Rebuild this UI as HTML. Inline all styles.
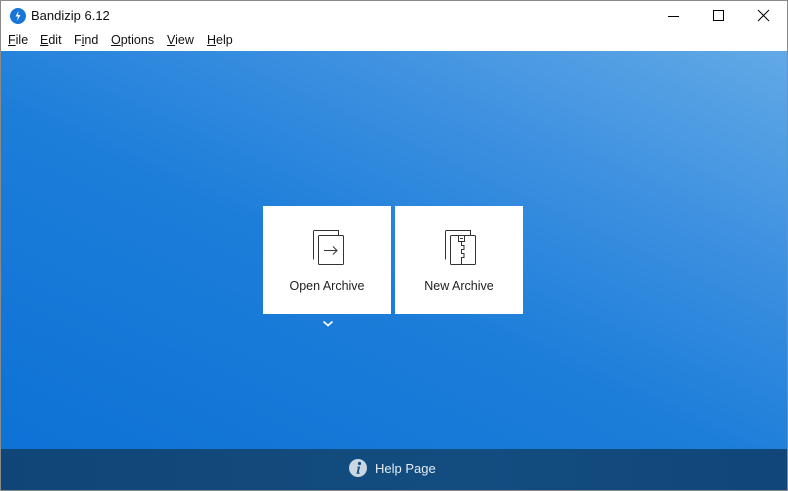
<!DOCTYPE html>
<html><head><meta charset="utf-8"><style>
*{margin:0;padding:0;box-sizing:border-box}
body{width:788px;height:491px;overflow:hidden;font-family:"Liberation Sans","Noto Sans CJK KR",sans-serif;background:#fff;position:relative}
.frame{position:absolute;inset:0;border:1px solid #8a8a8a}
.title{position:absolute;left:1px;top:1px;right:1px;height:29px;background:#fff}
.title .t{position:absolute;left:30px;top:7px;font-size:13px;color:#111}
.logo{position:absolute;left:9px;top:7px;width:16px;height:16px;border-radius:50%;background:#1877d6}
.menu{position:absolute;left:1px;top:30px;right:1px;height:21px;background:#fff;font-size:12.5px;color:#111}
.menu span{position:absolute;top:3px}
.menu u{text-decoration:underline}
.main{position:absolute;left:1px;top:51px;right:1px;height:398px;background:linear-gradient(205deg,#62a9e6 0%,#3b8fe0 30%,#1d7ed9 55%,#0d72d6 100%)}
.foot{position:absolute;left:1px;top:449px;right:1px;bottom:1px;background:linear-gradient(90deg,#104677,#134d80 60%,#10467a)}
.tile{position:absolute;top:155px;width:128px;height:108px;background:#fff;text-align:center;font-size:12.5px;color:#222}
.tile .l{position:absolute;left:0;right:0;top:73px}
.tile svg{position:absolute;left:50px;top:24px}
</style></head><body>
<div class="frame"></div>
<div class="title">
<div class="logo"><svg width="16" height="16" viewBox="0 0 16 16"><path d="M8.5 3 L5.5 8.5 H8 L7 13 L10.5 7 H8 Z" fill="#fff"/></svg></div>
<div class="t">Bandizip 6.12</div>
<svg style="position:absolute;left:666px;top:8px" width="14" height="14"><line x1="1" y1="7.5" x2="12" y2="7.5" stroke="#000"/></svg>
<svg style="position:absolute;left:711px;top:8px" width="14" height="14"><rect x="1.5" y="1.5" width="10" height="10" fill="none" stroke="#000"/></svg>
<svg style="position:absolute;left:756px;top:8px" width="14" height="14"><path d="M1 1L12 12M12 1L1 12" stroke="#000"/></svg>
</div>
<div class="menu">
<span style="left:7px"><u>F</u>ile</span>
<span style="left:39px"><u>E</u>dit</span>
<span style="left:73px">F<u>i</u>nd</span>
<span style="left:110px"><u>O</u>ptions</span>
<span style="left:166px"><u>V</u>iew</span>
<span style="left:206px"><u>H</u>elp</span>
</div>
<div class="main">
<div class="tile" style="left:262px">
<svg width="32" height="36" viewBox="0 0 32 36"><path d="M0.5 29.5V1.5a1 1 0 0 1 1-1h24v5" fill="none" stroke="#333"/><rect x="5.5" y="5.5" width="25" height="29" rx="1" fill="#fff" stroke="#333"/><path d="M11 20.5h13M20 16.5l4 4-4 4" fill="none" stroke="#333"/></svg>
<div class="l">Open Archive</div></div>
<div class="tile" style="left:394px">
<svg width="32" height="36" viewBox="0 0 32 36"><path d="M0.5 29.5V1.5a1 1 0 0 1 1-1h24v5" fill="none" stroke="#333"/><rect x="5.5" y="5.5" width="25" height="29" rx="1" fill="#fff" stroke="#333"/><rect x="13.5" y="5.5" width="6" height="6" fill="none" stroke="#333"/><path d="M15 8.5h3" stroke="#333"/><path d="M16.5 11.5v4h2.5v4h-2.5v4h2.5v4h-2.5v7" fill="none" stroke="#333"/></svg>
<div class="l">New Archive</div></div>
<svg style="position:absolute;left:321px;top:269px" width="12" height="8"><path d="M1.5 1.5l4.5 4 4.5-4" fill="none" stroke="#fff" stroke-width="1.6"/></svg>
</div>
<div class="foot">
<svg style="position:absolute;left:348px;top:10px" width="18" height="18" viewBox="0 0 18 18"><circle cx="9" cy="9" r="9" fill="#c9d6e3"/><circle cx="10.5" cy="4.5" r="1.6" fill="#134d80"/><path d="M8.8 7.5h2.3L9.6 13.6h1.2l-.3 1.2H7.5l1.4-6H8.3z" fill="#134d80"/></svg>
<div style="position:absolute;left:374px;top:12px;font-size:13px;color:#e3ebf3">Help Page</div>
</div>
</body></html>
